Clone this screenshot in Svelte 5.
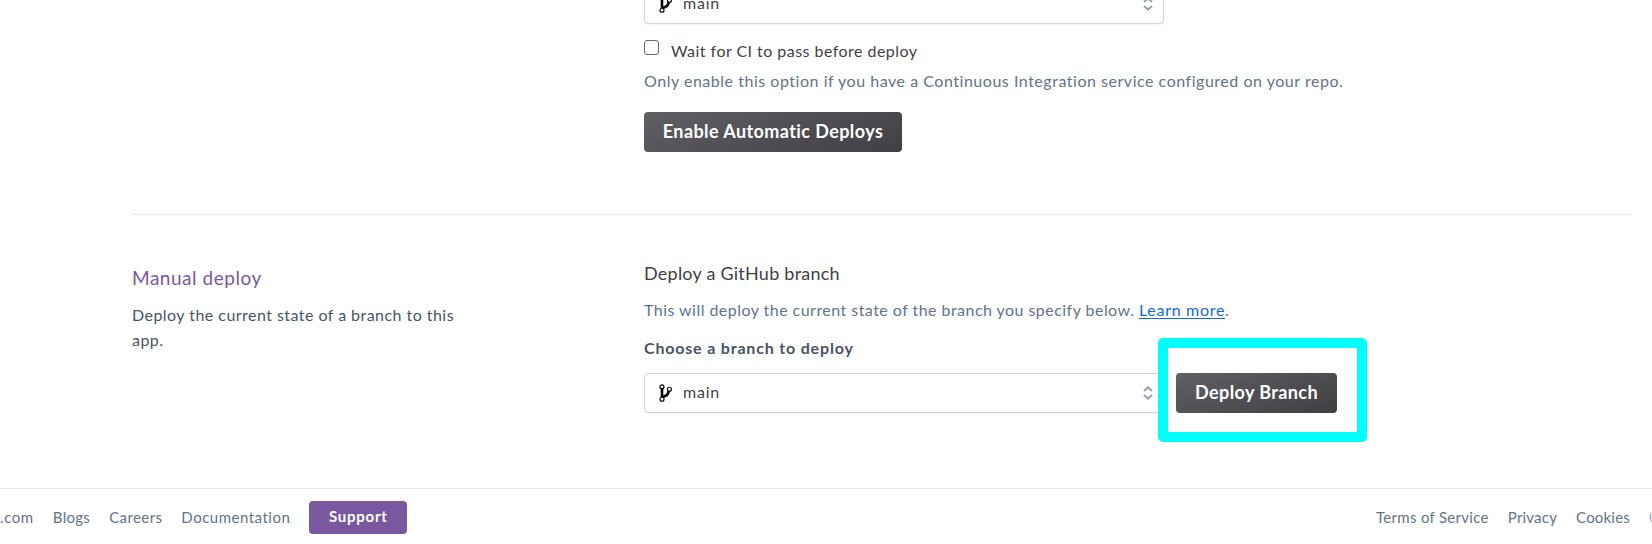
<script>
  const left = [['.com', 0.6], ['Blogs', 0.3], ['Careers', 0.4], ['Documentation', 0.5]];
  const right = [['Terms of Service', 0.3], ['Privacy', 0.2], ['Cookies', 0.2], ['© 2023 Salesforce.com', 0.3]];
</script>

{#snippet picker()}
  <div class="select">
    <svg class="branch" width="15" height="20" viewBox="0 0 15 20" fill="none" stroke="#000">
      <path d="M4 5.5v8.8" stroke-width="2.6" />
      <path d="M5 14.8v-2.2c2.7-.8 4.2-2 4.7-4.8l2.1.2c-.3 4.2-2.6 6.2-6.8 6.8z" fill="#000" stroke-width=".4" />
      <circle cx="4" cy="3.8" r="2" fill="#fff" stroke-width="1.15" />
      <circle cx="11.4" cy="6.2" r="2" fill="#fff" stroke-width="1.15" />
      <circle cx="4" cy="16.2" r="2" fill="#fff" stroke-width="1.15" />
    </svg>
    <span class="name">main</span>
    <svg class="chev" width="10" height="14" viewBox="0 0 10 14" fill="none" stroke="#96a3b6" stroke-width="2">
      <path d="M1 5l4-3.6L9 5M1 9l4 3.6L9 9" />
    </svg>
  </div>
{/snippet}

<div class="page">
  <main>
    <section class="auto">
      {@render picker()}
      <label class="wait"><input type="checkbox" /><span>Wait for CI to pass before deploy</span></label>
      <p class="hint">Only enable this option if you have a Continuous Integration service configured on your repo.</p>
      <button class="dark enable">Enable Automatic Deploys</button>
    </section>
    <section class="manual">
      <div class="about">
        <h2>Manual deploy</h2>
        <p>Deploy the current state of a branch to this app.</p>
      </div>
      <div class="form">
        <h3>Deploy a GitHub branch</h3>
        <p class="desc">This will deploy the current state of the branch you specify below. <a href="#learn">Learn more</a>.</p>
        <div class="label">Choose a branch to deploy</div>
        <div class="row">
          {@render picker()}
          <div class="target">
            <button class="dark deploy">Deploy Branch</button>
            <div class="highlight"></div>
          </div>
        </div>
      </div>
    </section>
  </main>
  <footer>
    <nav class="start">
      {#each left as [t, s]}<span style="letter-spacing:{s}px">{t}</span>{/each}
      <button class="support">Support</button>
    </nav>
    <nav class="end">
      {#each right as [t, s]}<span style="letter-spacing:{s}px">{t}</span>{/each}
    </nav>
  </footer>
</div>

<style>
  :global(body) { overflow: hidden; background: #fff; }
  .page { width: 1652px; height: 544px; overflow: hidden; display: flex; flex-direction: column; font: 16px/25px Lato, sans-serif; letter-spacing: .46px; color: #3f3f44; }
  p, h2, h3 { margin: 0; font-weight: 400; }
  button { border: 0; padding: 0; font: inherit; color: #fff; }
  main { width: 1500px; margin-left: 132px; height: 488px; box-sizing: border-box; flex: none; }
  .auto { padding-left: 512px; margin-top: -16px; height: 230px; box-sizing: border-box; display: flex; flex-direction: column; align-items: flex-start; }
  .select { width: 520px; height: 40px; flex: none; box-sizing: border-box; border: 1px solid #cfd7e6; border-radius: 4px; box-shadow: 0 1px 2px rgba(207, 215, 230, .3); display: flex; align-items: center; padding: 0 10px 0 13px; background: #fff; }
  .branch { margin-right: 10px; }
  .name { flex: 1; letter-spacing: .8px; padding-bottom: 3px; }
  .wait { display: flex; margin-top: 14px; height: 25px; }
  input { appearance: none; width: 15px; height: 15px; margin: 2px 12px 0 0; border: 1px solid #6b6b70; border-radius: 3px; }
  .hint { color: #62738d; letter-spacing: .525px; margin-top: 5px; white-space: nowrap; }
  .dark { height: 40px; border-radius: 4px; background: linear-gradient(160deg, #606064, #3f3f44); font-size: 18px; font-weight: 700; letter-spacing: .42px; line-height: 38px; padding-bottom: 2px; }
  .enable { width: 258px; margin-top: 19px; }
  .manual { border-top: 1px solid #e3e8f0; display: flex; height: 273px; }
  .about { width: 512px; flex: none; padding-top: 50px; }
  .about h2 { font-size: 19px; letter-spacing: .53px; color: #79589f; line-height: 26px; }
  .about p { width: 335px; margin-top: 11px; color: #475468; }
  .form { padding-top: 45px; }
  h3 { font-size: 18px; line-height: 26px; letter-spacing: .24px; }
  .desc { margin-top: 11px; color: #62738d; white-space: nowrap; }
  .desc a { color: #0b6be0; letter-spacing: .7px; text-underline-offset: 2px; text-decoration-skip-ink: none; }
  .label { margin-top: 13px; font-weight: 700; letter-spacing: .82px; color: #475468; }
  .row { display: flex; gap: 12px; margin-top: 13px; }
  .target { position: relative; }
  .deploy { width: 161px; letter-spacing: .4px; display: block; }
  .highlight { position: absolute; left: -18.5px; top: -35.5px; width: 209px; height: 104px; box-sizing: border-box; border: 10px solid #0ff; border-radius: 5px; }
  footer { flex: 1; border-top: 1px solid #eaeef4; display: flex; justify-content: space-between; font-size: 15px; color: #62738d; white-space: nowrap; }
  nav { display: flex; gap: 19px; line-height: 25px; padding-top: 16px; }
  .end { width: 276px; flex: none; }
  .support { width: 98px; height: 33px; margin-top: -4px; border-radius: 4px; background: #79589f; font-weight: 700; letter-spacing: .75px; line-height: 31px; padding-bottom: 2px; }
</style>
